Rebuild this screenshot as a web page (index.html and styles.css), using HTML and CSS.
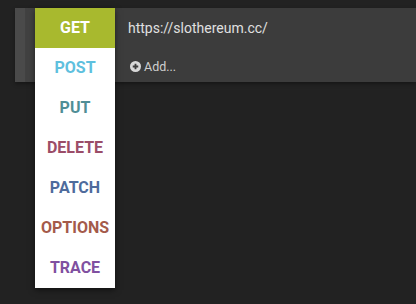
FILE: index.html
```html
<!DOCTYPE html>
<html>
<head>
<meta charset="utf-8">
<link rel="stylesheet" href="styles.css">
</head>
<body>
<div class="page">
  <div class="card">
    <div class="stripe"></div>
    <div class="stripe2"></div>
    <div class="method-slot"></div>
    <div class="body">
      <div class="url">https://slothereum.cc/</div>
      <div class="add">
        <svg class="plus" width="11" height="11" viewBox="0 0 12 12"><circle cx="6" cy="6" r="6" fill="#d8d8d8"/><path d="M6 3v6M3 6h6" stroke="#3c3c3c" stroke-width="2"/></svg>
        <span>Add...</span>
      </div>
    </div>
  </div>
  <ul class="menu">
    <li class="m get">GET</li>
    <li class="m post">POST</li>
    <li class="m put">PUT</li>
    <li class="m delete">DELETE</li>
    <li class="m patch">PATCH</li>
    <li class="m options">OPTIONS</li>
    <li class="m trace">TRACE</li>
  </ul>
</div>
</body>
</html>
```
FILE: styles.css
```css
html, body {
  margin: 0;
  padding: 0;
  background: #222222;
  width: 416px;
  height: 304px;
  overflow: hidden;
  font-family: Roboto, "Liberation Sans", sans-serif;
}
.page {
  position: relative;
  padding: 8px 0 0 15px;
}
.card {
  display: flex;
  height: 74px;
  background: #3c3c3c;
  box-shadow: 0 2px 4px rgba(0,0,0,0.35);
}
.stripe {
  width: 10px;
  background: #4a4a4a;
}
.stripe2 {
  width: 10px;
  background: #414141;
}
.method-slot {
  width: 80px;
}
.body {
  flex: 1;
  display: flex;
  flex-direction: column;
  padding-left: 13px;
}
.url {
  height: 40px;
  line-height: 40px;
  font-size: 14px;
  color: #e0e0e0;
}
.add {
  display: flex;
  align-items: center;
  gap: 3px;
  margin-top: 11px;
  font-size: 12.5px;
  color: #cfcfcf;
}
.plus { margin-left: 2px; }
.menu {
  position: absolute;
  top: 8px;
  left: 35px;
  width: 80px;
  margin: 0;
  padding: 0;
  list-style: none;
  background: #ffffff;
  box-shadow: 0 2px 6px rgba(0,0,0,0.5);
}
.m {
  height: 40px;
  line-height: 40px;
  text-align: center;
  font-weight: 700;
  font-size: 16px;
}
.get { background: #a8b92e; color: #ffffff; }
.post { color: #5ec0de; }
.put { color: #4f8e96; }
.delete { color: #9b4d68; }
.patch { color: #4e6b9c; }
.options { color: #a45a4a; }
.trace { color: #8050a0; }
```
